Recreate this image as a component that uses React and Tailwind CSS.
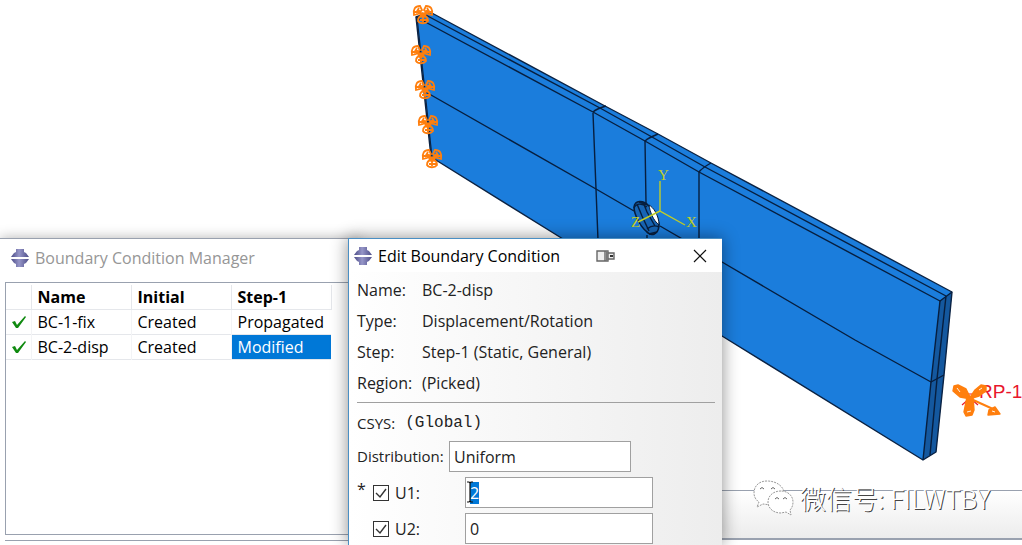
import React, { useEffect, useRef } from 'react';

const conditions = [
  { name: 'BC-1-fix', initial: 'Created', step: 'Propagated' },
  { name: 'BC-2-disp', initial: 'Created', step: 'Modified', selected: true },
];

const details = [
  { label: 'Name:', value: 'BC-2-disp' },
  { label: 'Type:', value: 'Displacement/Rotation' },
  { label: 'Step:', value: 'Step-1 (Static, General)' },
  { label: 'Region:', value: '(Picked)' },
];

const fixedPoints = [
  [423, 13],
  [421, 53],
  [425, 88],
  [428, 123],
  [432, 157],
];

const AppIcon = () => (
  <svg width="18" height="18" viewBox="0 0 18 18" aria-hidden="true" className="shrink-0">
    <defs>
      <linearGradient id="cross" x1="0" x2="1">
        <stop offset="0" stopColor="#4a4a86" />
        <stop offset="0.45" stopColor="#9696c8" />
        <stop offset="1" stopColor="#4d4d88" />
      </linearGradient>
    </defs>
    <path d="M5 0h8v3l2 1 3 4H0l3-4 2-1z" fill="url(#cross)" />
    <path d="M0 10h18l-3 4-2 1v3H5v-3l-2-1z" fill="url(#cross)" />
  </svg>
);

const FixedSymbol = ({ x, y }) => (
  <g transform={`translate(${x} ${y})`} stroke="#ff7f0e" strokeWidth="1.8" fill="none">
    <path d="M0 0v5M-6-2l6 4 6-4M-3 3l3-2 3 2" strokeWidth="3" />
    <path d="M-9 2c-1-6 1-9 6-9l2 4-4 4zM-7 0l3-5M-9-1l6-1" />
    <path d="M9 2c1-6-1-9-6-9l-2 4 4 4zM7 0L4-5M9-1L3-2" />
    <path d="M-5 8c0-4 2-5 5-5s5 1 5 5c-2 3-8 3-10 0zM-3 7h7M0 4v5" />
  </g>
);

const Viewport = () => (
  <svg className="absolute left-0 top-0" width="1022" height="545" viewBox="0 0 1022 545" role="img" aria-label="Plate model">
    <g strokeLinejoin="round">
      <path d="M416 17L430 12 605 106 658 134 711 163 952 292 944 375 936 452 923 460 722 336 563 239 431 157z" fill="#1b7ddc" />
      <path d="M940 301l12-9-8 83-8 77-13 8 8-78z" fill="#14589f" />
      <path d="M416 17L430 12 605 106 658 134 711 163 952 292 944 375 936 452 923 460 722 336 563 239 431 157z" fill="none" stroke="#0b2242" strokeWidth="1.4" />
      <g fill="none" stroke="#071e3e" strokeWidth="1.4">
        <path d="M416 17L593 112 645 141 699 172 940 301 952 292" />
        <path d="M422 13L600 108 652 137 705 167 946 296" />
        <path d="M940 301l-9 81-8 78M946 296l-9 83-7 76" />
        <path d="M424 91L596 189 634 211M660 226l62 36 133 78 76 42 13-7" />
        <path d="M593 113l3 76 2 51M645 141l1 62M647 235v5M699 172v68" />
        <path d="M593 112q3-3 13-6M645 141q3-3 13-7M699 172q3-4 12-9" />
      </g>
    </g>

    {/* hole through the plate */}
    <path d="M634 207c1-7 9-7 14-2 6 5 11 14 11 21-1 9-8 11-13 5-5-4-12-16-12-24z" fill="#1765b5" stroke="#071e3e" strokeWidth="1.6" />
    <path d="M634 208c2-5 8-5 13-1M639 202l9 3M637 204l5 12 7 15M643 202l4 10 8 14M647 229q6-5 12-2M649 234l8-2" fill="none" stroke="#071e3e" strokeWidth="1.4" />
    <path d="M649 205c4 2 10 10 10 20-6-5-9-13-10-20z" fill="#fff" stroke="#071e3e" strokeWidth="1" />

    {/* triad */}
    <path d="M660 181v30l25 14M660 211l-22 11" fill="none" stroke="#c0ce28" strokeWidth="1.4" />
    <g fill="#c0ce28" fontFamily="Liberation Serif, serif" fontSize="15">
      <text x="658" y="180">Y</text>
      <text x="686" y="227">X</text>
      <text x="631" y="227">Z</text>
    </g>

    <path d="M417 17l15 140" stroke="#0b2242" strokeWidth="1.2" />
    {fixedPoints.map(([x, y]) => (
      <FixedSymbol key={y} x={x} y={y} />
    ))}

    {/* reference point */}
    <text x="979" y="398" fill="#e8172c" fontFamily="Liberation Sans, sans-serif" fontSize="19">RP-1</text>
    <path d="M962 405l8-7 8 7M964 394h12" fill="none" stroke="#e8172c" strokeWidth="1.2" />
    <path d="M971 399l22 10" stroke="#ff7f0e" strokeWidth="2" />
    <g fill="#ff7f0e" stroke="#ff7f0e" strokeWidth="1.4" strokeLinejoin="round">
      <path d="M971 399l-11-2-7-6 1-5 4-1 8 4z" />
      <path d="M969 399l6-9 6-5 5 1v5l-7 5z" />
      <path d="M967 397h6l1 13-2 5-6 1-2-4z" />
      <path d="M995 407l5 7-12 1 1-5z" />
    </g>
    <path d="M957 388l3 4M979 390l3-2M967 412l4-1M992 411l3 1" stroke="#fff3e6" strokeWidth="1" />
  </svg>
);

const ManagerWindow = () => (
  <section className="absolute left-0 top-[238px] bottom-0 w-[360px] border-t border-gray-400 bg-white shadow-[0_0_12px_rgba(0,0,0,0.3)] flex flex-col">
    <header className="h-[43px] pb-[6px] pl-[11px] flex items-center gap-[6px] text-base text-[#969696] shrink-0">
      <AppIcon />
      <h2>Boundary Condition Manager</h2>
    </header>
    <div className="ml-[5px] flex-1 border border-gray-400 bg-white">
      <table className="mt-[2px] w-[325px] table-fixed border-collapse text-left text-base leading-6">
        <colgroup>
          <col className="w-[25px]" />
          <col className="w-[100px]" />
          <col className="w-[100px]" />
          <col className="w-[100px]" />
        </colgroup>
        <thead>
          <tr className="border-b border-gray-200">
            <th className="border-r border-gray-200"></th>
            <th className="border-r border-gray-200 pl-[6px] font-bold">Name</th>
            <th className="border-r border-gray-200 pl-[6px] font-bold">Initial</th>
            <th className="border-r border-gray-200 pl-[6px] font-bold">Step-1</th>
          </tr>
        </thead>
        <tbody>
          {conditions.map((item) => (
            <tr key={item.name} className="border-b border-gray-200">
              <td className="border-r border-gray-100">
                <svg width="16" height="14" viewBox="0 0 16 14" className="ml-[5px]" aria-hidden="true">
                  <path d="M1 7l3-1 2 4 8-9 1 1-8 11H5z" fill="#108a10" />
                </svg>
              </td>
              <td className="border-r border-gray-100 pl-[6px]">{item.name}</td>
              <td className="border-r border-gray-100 pl-[6px]">{item.initial}</td>
              <td className={item.selected ? 'bg-[#0078d7] pl-[6px] text-white' : 'pl-[6px]'}>{item.step}</td>
            </tr>
          ))}
        </tbody>
      </table>
    </div>
    <div className="ml-[5px] mt-[5px] mb-1 border-t border-gray-400" />
  </section>
);

const ComponentRow = ({ id, label, value, marked, inputRef, children }) => (
  <div className="flex h-[31px] items-center">
    <span className="w-4 self-start">{marked ? '*' : ''}</span>
    <input
      id={`${id}-on`}
      type="checkbox"
      defaultChecked
      className="size-4 appearance-none border border-[#333] bg-white"
    />
    <svg width="16" height="16" viewBox="0 0 16 16" className="-ml-4 pointer-events-none" aria-hidden="true">
      <path d="M3 8l4 4 6-8" fill="none" stroke="#333" strokeWidth="1.4" />
    </svg>
    <label htmlFor={`${id}-on`} className="ml-[6px] w-[70px]">{label}</label>
    <div className="relative">
      <input
        ref={inputRef}
        aria-label={label}
        defaultValue={value}
        className="block h-[31px] w-[188px] border border-[#a0a0a0] bg-white px-1 text-base outline-none selection:bg-[#0078d7] selection:text-white"
      />
      {children}
    </div>
  </div>
);

const EditDialog = () => {
  const u1 = useRef(null);

  useEffect(() => {
    u1.current.focus({ preventScroll: true });
    u1.current.select();
  }, []);

  return (
    <section className="absolute left-[348px] top-[238px] bottom-0 w-[374px] overflow-clip border-l border-t border-[#4a8fc4] bg-gradient-to-r from-white via-[#f6f6f6] to-[#ededed] text-base text-[#222]">
      <header className="h-[33px] bg-white pl-[5px] pr-[15px] flex items-center gap-[6px] text-base text-black">
        <AppIcon />
        <h2>Edit Boundary Condition</h2>
        <svg width="19" height="12" viewBox="0 0 19 12" className="ml-auto" aria-hidden="true">
          <path d="M1 1h11v10H1zM9 1v10M12 3h6v6h-6" fill="#eee" stroke="#666" strokeWidth="1.4" />
          <path d="M10 1h2v10h-2z" fill="#777" />
          <path d="M14 5h3v2h-3z" fill="#333" />
        </svg>
        <button type="button" aria-label="Close" className="ml-[72px]">
          <svg width="14" height="14" viewBox="0 0 14 14" className="block">
            <path d="M1 1l12 12M13 1L1 13" stroke="#111" strokeWidth="1.2" />
          </svg>
        </button>
      </header>

      <div className="pl-2 pr-[7px]">
        <dl className="pt-[2px]">
          {details.map((row) => (
            <div key={row.label} className="flex h-[31px] items-center">
              <dt className="w-[65px]">{row.label}</dt>
              <dd>{row.value}</dd>
            </div>
          ))}
        </dl>
        <hr className="mt-1 border-[#a0a0a0]" />
        <div className="flex h-[38px] items-center gap-[10px] pt-[2px] text-[15px]">
          <span>CSYS:</span>
          <span className="font-['Liberation_Mono',monospace] text-base">(Global)</span>
        </div>
        <div className="flex items-center text-[15px]">
          <label htmlFor="distribution" className="w-[92px]">Distribution:</label>
          <select id="distribution" className="h-[31px] w-[182px] appearance-none border border-[#a0a0a0] bg-white px-1 text-base">
            <option>Uniform</option>
          </select>
        </div>
        <div className="mt-[5px] flex flex-col gap-[5px]">
          <ComponentRow id="u1" label="U1:" value="2" marked inputRef={u1}>
            <svg width="6" height="22" viewBox="0 0 6 22" className="absolute left-[2px] top-[4px]" aria-hidden="true">
              <path d="M0 1h2l1 1 1-1h2M3 1v20M0 21h2l1-1 1 1h2" fill="none" stroke="#111" strokeWidth="1.2" />
            </svg>
          </ComponentRow>
          <ComponentRow id="u2" label="U2:" value="0" />
        </div>
      </div>
    </section>
  );
};

const Watermark = () => (
  <div className="absolute bottom-7 right-8 flex items-center gap-[6px]">
    <svg width="42" height="38" viewBox="0 0 42 38" aria-hidden="true">
      <g fill="#fff" stroke="#999" strokeWidth="1" strokeDasharray="2 1">
        <path d="M15 2C7 2 2 7 2 14c0 4 2 7 5 9l-2 5 6-3 8 1c9 0 13-6 13-12S25 2 15 2z" />
        <path d="M29 12c-8 0-13 5-13 11s5 11 13 11l5-1 5 3-1-5c2-2 3-5 3-8 0-6-5-11-12-11z" />
      </g>
      <g fill="none" stroke="#666">
        <path d="M8 10q2-3 4 0M19 10q2-3 4 0M23 20q2-3 4 0M31 20q2-3 4 0" />
      </g>
    </svg>
    <span className="font-['Noto_Sans_CJK_SC',sans-serif] text-[26px] leading-8 font-light text-white [text-shadow:1px_1px_0_#444]">
      微信号: FILWTBY
    </span>
  </div>
);

export default function App() {
  return (
    <main className="relative flex min-h-screen flex-col justify-end overflow-hidden bg-white font-['Open_Sans','Noto_Sans_CJK_SC',sans-serif] text-black">
      <div className="mb-[5px] h-[50px] border-t border-b-2 border-t-gray-400 border-b-gray-400 bg-gradient-to-b from-white to-[#ececec]" />
      <Viewport />
      <ManagerWindow />
      <div className="absolute left-[348px] top-[238px] bottom-0 w-[374px] shadow-[0_0_16px_rgba(0,0,0,0.45)]" />
      <EditDialog />
      <Watermark />
    </main>
  );
}
